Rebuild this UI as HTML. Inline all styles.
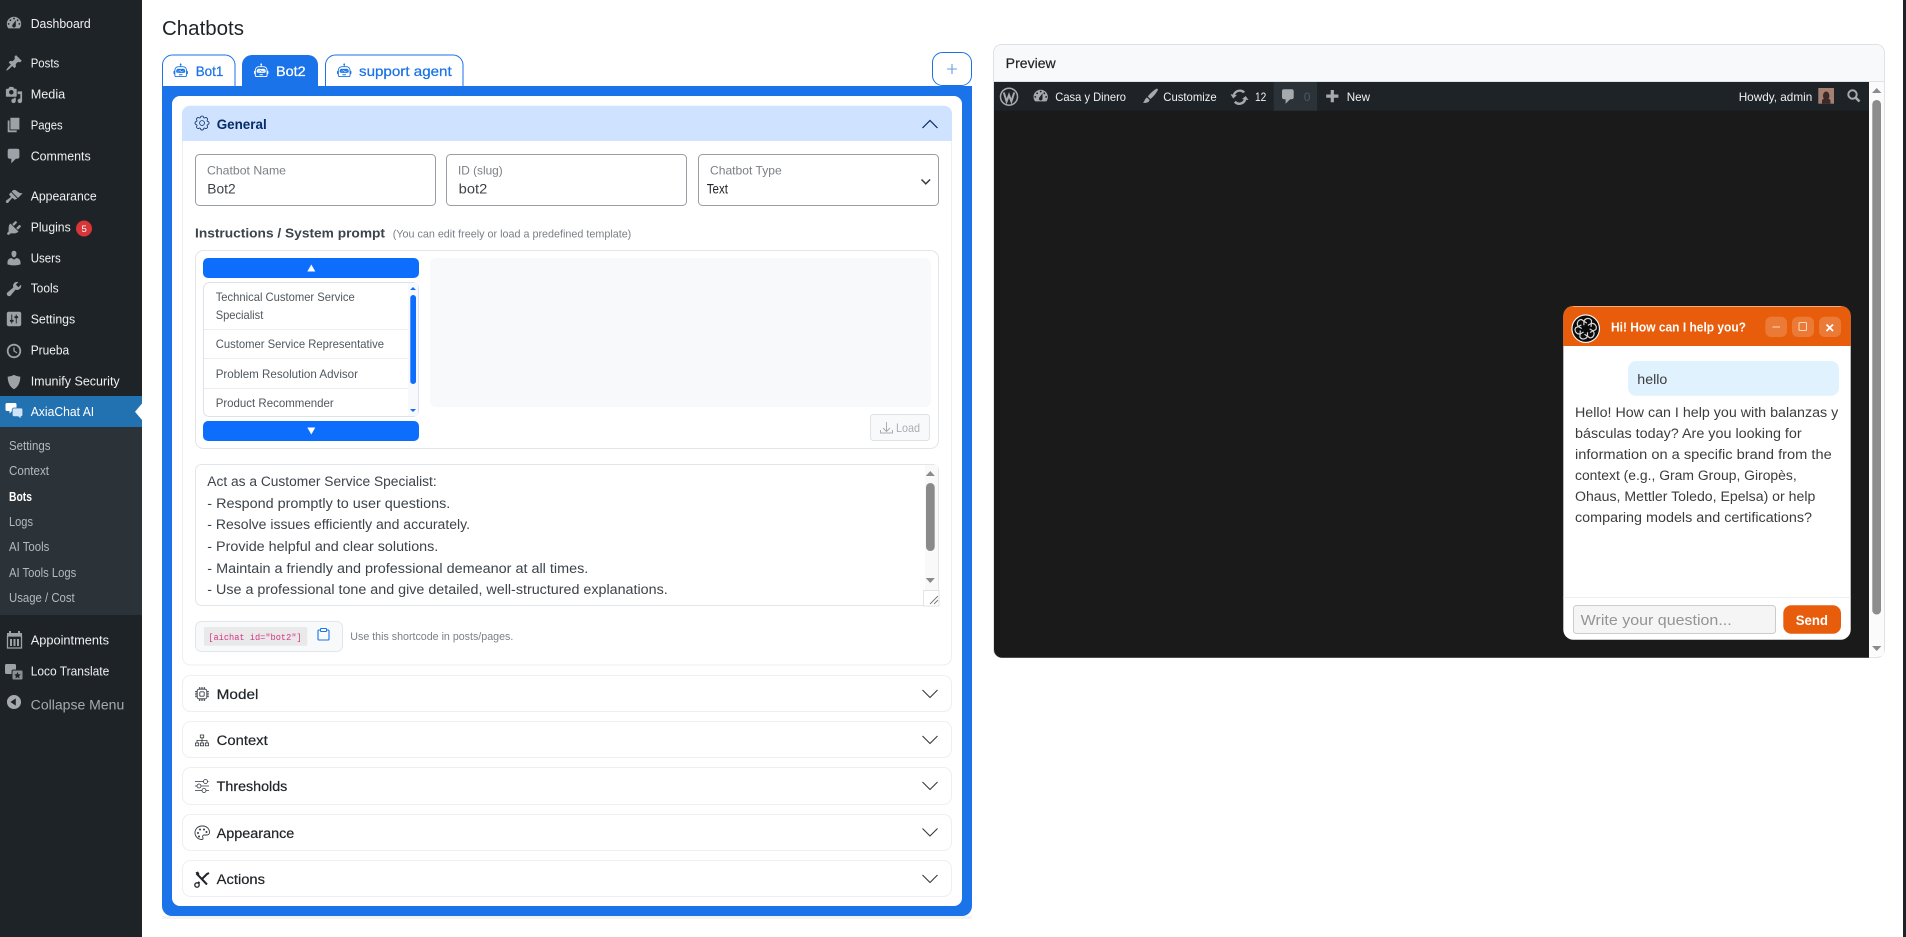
<!DOCTYPE html>
<html lang="en"><head><meta charset="utf-8"><title>Chatbots</title>
<style>
html,body{margin:0;padding:0;background:#fff;overflow:hidden}
svg{display:block}
text{font-family:"Liberation Sans",sans-serif;white-space:pre}
.m{font-size:13px;fill:#f0f0f1}
.s{font-size:12.5px;fill:#b4b9be}
.i{fill:#9ca2a7}
.hdr{font-size:13.5px;fill:#212529;stroke:#212529;stroke-width:.2}
.ch{fill:none;stroke:#343a40;stroke-width:1.1}
.lbl{font-size:12px;fill:#7c8085}
.val{font-size:13.5px;fill:#3c434a}
.li{font-size:12px;fill:#50575e}
.ta{font-size:13.5px;fill:#3c434a}
.ab{font-size:12px;fill:#f0f0f1}
.msg{font-size:13.5px;fill:#3c3c3c}
</style></head><body>
<svg width="1906" height="937" viewBox="0 0 1906 937" xmlns="http://www.w3.org/2000/svg">
<defs>
<path id="robot" d="M6 12.5a.5.5 0 0 1 .5-.5h3a.5.5 0 0 1 0 1h-3a.5.5 0 0 1-.5-.5M3 8.062C3 6.76 4.235 5.765 5.53 5.886a26.6 26.6 0 0 0 4.94 0C11.765 5.765 13 6.76 13 8.062v1.157a.93.93 0 0 1-.765.935c-.845.147-2.34.346-4.235.346s-3.39-.2-4.235-.346A.93.93 0 0 1 3 9.219zm4.542-.827a.25.25 0 0 0-.217.068l-.92.9a25 25 0 0 1-1.871-.183.25.25 0 0 0-.068.495c.55.076 1.232.149 2.02.193a.25.25 0 0 0 .189-.071l.754-.736.847 1.71a.25.25 0 0 0 .404.062l.932-.97a25 25 0 0 0 1.922-.188.25.25 0 0 0-.068-.495c-.538.074-1.207.145-1.98.189a.25.25 0 0 0-.166.076l-.754.785-.842-1.7a.25.25 0 0 0-.182-.135M8.5 1.866a1 1 0 1 0-1 0V3h-2A4.5 4.5 0 0 0 1 7.5V8a1 1 0 0 0-1 1v2a1 1 0 0 0 1 1v1a2 2 0 0 0 2 2h10a2 2 0 0 0 2-2v-1a1 1 0 0 0 1-1V9a1 1 0 0 0-1-1v-.5A4.5 4.5 0 0 0 10.5 3h-2zM14 7.5V13a1 1 0 0 1-1 1H3a1 1 0 0 1-1-1V7.5A3.5 3.5 0 0 1 5.5 4h5A3.5 3.5 0 0 1 14 7.5"/>
<path id="dash" d="M3.76 16h12.48c1.1-1.37 1.76-3.11 1.76-5 0-4.42-3.58-8-8-8s-8 3.58-8 8c0 1.89.66 3.63 1.76 5zM10 4c.55 0 1 .45 1 1s-.45 1-1 1-1-.45-1-1 .45-1 1-1zM6 6c.55 0 1 .45 1 1s-.45 1-1 1-1-.45-1-1 .45-1 1-1zm8 0c.55 0 1 .45 1 1s-.45 1-1 1-1-.45-1-1 .45-1 1-1zm-5.37 5.55L12 7v6c0 1.1-.9 2-2 2s-2-.9-2-2c0-.57.24-1.08.63-1.45zM4 10c.55 0 1 .45 1 1s-.45 1-1 1-1-.45-1-1 .45-1 1-1zm12 0c.55 0 1 .45 1 1s-.45 1-1 1-1-.45-1-1 .45-1 1-1z" fill-rule="evenodd"/>
<path id="bubble" d="M5 2h9c1.1 0 2 .9 2 2v7c0 1.1-.9 2-2 2h-2l-5 5v-5H5c-1.1 0-2-.9-2-2V4c0-1.1.9-2 2-2z"/>
<path id="brush" d="M14.48 11.06L7.41 3.99l1.5-1.5c.5-.56 2.3-.47 3.51.32 1.21.8 1.43 1.28 2.91 2.1 1.18.64 2.45 1.26 4.45.85zm-.71.71L6.7 4.7 4.93 6.47c-.39.39-.39 1.02 0 1.41l1.06 1.06c.39.39.39 1.03 0 1.42-.6.6-1.43 1.11-2.21 1.69-.35.26-.7.53-1.01.84C1.43 13.23.28 15.1 1.4 16.2c.86.86 1.99.53 2.83-.67.85-1.19 2.36-2.94 3.4-3.96.39-.39 1.03-.39 1.42 0l1.06 1.06c.39.39 1.02.39 1.41 0z"/>
<path id="chev" d="M0 0L7.5 7.5L15 0"/>
<path id="petal" d="M-1.800 -3.500V-7.200A4.200 4.200 0 0 1 5.800 -8.300L5.400 -1.800"/>
</defs>

<!-- page -->
<rect width="1906" height="937" fill="#fff"/>
<rect x="1903" y="0" width="3" height="937" fill="#1d2327"/>

<!-- sidebar -->
<rect x="0" y="0" width="142" height="937" fill="#1d2327"/>
<rect x="0" y="427" width="142" height="188" fill="#2c3338"/>
<rect x="0" y="396" width="142" height="31" fill="#2271b1"/>
<path d="M142 403.500L135 411.700L142 420z" fill="#fff"/>

<g class="i">
<use href="#dash" transform="translate(5,14) scale(.9)"/>
<path transform="translate(5,54) scale(.9)" d="M10.44 3.02l1.82-1.82 6.36 6.35-1.83 1.82c-1.05-.68-2.48-.57-3.41.36l-.75.75c-.92.93-1.04 2.35-.35 3.41l-1.83 1.82-2.41-2.41-2.8 2.79c-.42.42-3.38 2.71-3.8 2.29s1.86-3.39 2.28-3.81l2.79-2.79L4.1 9.36l1.83-1.82c1.05.69 2.48.57 3.4-.36l.75-.75c.93-.92 1.05-2.35.36-3.41z"/>
<path transform="translate(5,86) scale(.9)" d="M13 11V4c0-.55-.45-1-1-1h-1.67L9 1H5L3.67 3H2c-.55 0-1 .45-1 1v7c0 .55.45 1 1 1h10c.55 0 1-.45 1-1zM7 4.500c1.380 0 2.500 1.120 2.500 2.500S8.380 9.500 7 9.500 4.500 8.380 4.500 7 5.620 4.500 7 4.500zM14 6h5v10.500c0 1.380-1.120 2.500-2.500 2.500S14 17.880 14 16.500s1.120-2.500 2.500-2.500c.17 0 .34.020.5.050V9h-3V6zm-4 8.050V13h2v3.500c0 1.380-1.120 2.500-2.500 2.500S7 17.880 7 16.500 8.120 14 9.500 14c.17 0 .34.020.5.050z" fill-rule="evenodd"/>
<path transform="translate(5,116) scale(.9)" d="M6 15V2h10v13H6zm-1 1h8v2H3V5h2v11z"/>
<use href="#bubble" transform="translate(5,147) scale(.9)"/>
<use href="#brush" transform="translate(5,188) scale(.9)"/>
<path transform="translate(5,219) scale(.9)" d="M13.110 4.360L9.870 7.600 8 5.730l3.240-3.240c.35-.34 1.050-.2 1.560.32.52.51.66 1.210.31 1.550zm-8 1.770l.91-1.120 9.010 9.010-1.190.84c-.71.71-2.630 1.160-3.820 1.160H6.140L4.900 17.260c-.59.59-1.540.59-2.120 0-.59-.58-.59-1.530 0-2.120l1.240-1.240v-3.880c0-1.130.4-3.190 1.090-3.890zm7.260 3.970l3.240-3.240c.34-.35 1.040-.21 1.550.31.52.51.66 1.210.31 1.550l-3.240 3.250z"/>
<path transform="translate(5,249) scale(.9)" d="M10 9.250c-2.270 0-2.730-3.440-2.730-3.440C7 4.020 7.820 2 9.970 2c2.160 0 2.980 2.020 2.710 3.810 0 0-.41 3.440-2.680 3.440zm0 2.570L12.720 10c2.390 0 4.520 2.330 4.520 4.530v2.490s-3.650 1.130-7.240 1.130c-3.650 0-7.240-1.130-7.240-1.130v-2.490c0-2.250 1.940-4.480 4.470-4.480z"/>
<path transform="translate(5,280) scale(.9)" d="M16.680 9.770c-1.340 1.340-3.300 1.670-4.950.99l-5.410 6.520c-.99.99-2.590.99-3.580 0s-.99-2.590 0-3.570l6.520-5.420c-.68-1.650-.35-3.610.99-4.950 1.280-1.280 3.120-1.620 4.720-1.060l-2.890 2.890 2.820 2.820 2.860-2.870c.53 1.580.18 3.390-1.080 4.650z"/>
<path transform="translate(5,310) scale(.9)" fill-rule="evenodd" d="M16 2H4C2.900 2 2 2.900 2 4v12c0 1.100.9 2 2 2h12c1.100 0 2-.9 2-2V4c0-1.100-.9-2-2-2zM7 5h1v6h1.500v2H8v2H7v-2H5.500v-2H7zm5 0h1v2h1.500v2H13v6h-1V9h-1.500V7H12z"/>
<path transform="translate(5,342) scale(.9)" fill-rule="evenodd" d="M10 2c4.420 0 8 3.580 8 8s-3.580 8-8 8-8-3.580-8-8 3.580-8 8-8zm0 2c-3.310 0-6 2.690-6 6s2.690 6 6 6 6-2.690 6-6-2.690-6-6-6zM9.300 6h1.400v3.600l3 1.900-.7 1.100-3.700-2.300z"/>
<path transform="translate(5,373) scale(.9)" d="M10 2s3 2 7 2c0 11-7 14-7 14S3 15 3 4c4 0 7-2 7-2z"/>
</g>
<!-- AxiaChat icon -->
<path d="M7 403h8a1.500 1.500 0 0 1 1.500 1.500v5a1.500 1.500 0 0 1-1.500 1.500h-3l-2.500 2.500V411H7a1.500 1.500 0 0 1-1.500-1.500v-5A1.500 1.500 0 0 1 7 403z" fill="#fff"/>
<path d="M14 408h7a1.800 1.800 0 0 1 1.800 1.800v5a1.800 1.800 0 0 1-1.800 1.800v2.400l-3-2.400h-4a1.800 1.800 0 0 1-1.800-1.800v-5A1.800 1.800 0 0 1 14 408z" fill="#cfe4f7" stroke="#2271b1" stroke-width=".8"/>
<!-- appointments -->
<g fill="#9ca2a7"><rect x="7" y="633" width="15" height="3.500"/><rect x="9" y="631" width="2" height="3"/><rect x="18" y="631" width="2" height="3"/></g>
<rect x="7.500" y="636" width="14" height="12" fill="none" stroke="#9ca2a7" stroke-width="1.300"/>
<g fill="#9ca2a7"><rect x="10" y="639" width="2" height="7"/><rect x="13.500" y="639" width="2" height="7"/><rect x="17" y="639" width="2" height="7"/></g>
<!-- loco -->
<rect x="5" y="664" width="11" height="10" rx="1.500" fill="#9ca2a7"/>
<rect x="12" y="670" width="11" height="10" rx="1.500" fill="#8a9096" stroke="#1d2327"/>
<path d="M17.500 672l1 2.300 2.300.2-1.700 1.600.5 2.300-2.100-1.200-2.100 1.200.5-2.300-1.700-1.600 2.300-.2z" fill="#1d2327"/>
<!-- collapse -->
<path transform="translate(5,693) scale(.9)" fill="#a7aaad" fill-rule="evenodd" d="M10 2.160c4.330 0 7.840 3.510 7.840 7.840s-3.510 7.840-7.840 7.840S2.160 14.330 2.160 10 5.670 2.160 10 2.160zM12 14V6l-6 4z"/>

<text class="m" x="30.700" y="28" textLength="60" lengthAdjust="spacingAndGlyphs">Dashboard</text>
<text class="m" x="30.700" y="67.700" textLength="28.500" lengthAdjust="spacingAndGlyphs">Posts</text>
<text class="m" x="30.700" y="98.700" textLength="34.500" lengthAdjust="spacingAndGlyphs">Media</text>
<text class="m" x="30.700" y="129.700" textLength="32" lengthAdjust="spacingAndGlyphs">Pages</text>
<text class="m" x="30.700" y="160.700" textLength="60" lengthAdjust="spacingAndGlyphs">Comments</text>
<text class="m" x="30.700" y="200.700" textLength="66" lengthAdjust="spacingAndGlyphs">Appearance</text>
<text class="m" x="30.700" y="231.700" textLength="40" lengthAdjust="spacingAndGlyphs">Plugins</text>
<circle cx="84" cy="228.500" r="8" fill="#d63638"/>
<text x="81.500" y="232" font-size="9.500" fill="#fff">5</text>
<text class="m" x="30.700" y="262.700" textLength="30" lengthAdjust="spacingAndGlyphs">Users</text>
<text class="m" x="30.700" y="292.700" textLength="28" lengthAdjust="spacingAndGlyphs">Tools</text>
<text class="m" x="30.700" y="323.700" textLength="44.500" lengthAdjust="spacingAndGlyphs">Settings</text>
<text class="m" x="30.700" y="354.700" textLength="38.500" lengthAdjust="spacingAndGlyphs">Prueba</text>
<text class="m" x="30.700" y="385.700" textLength="89" lengthAdjust="spacingAndGlyphs">Imunify Security</text>
<text class="m" x="30.700" y="416.200" textLength="63.500" lengthAdjust="spacingAndGlyphs" style="fill:#fff">AxiaChat AI</text>
<text class="s" x="9" y="450" textLength="41.500" lengthAdjust="spacingAndGlyphs">Settings</text>
<text class="s" x="9" y="475" textLength="40" lengthAdjust="spacingAndGlyphs">Context</text>
<text class="s" x="9" y="501" textLength="23" lengthAdjust="spacingAndGlyphs" style="fill:#fff;font-weight:bold">Bots</text>
<text class="s" x="9" y="526" textLength="24" lengthAdjust="spacingAndGlyphs">Logs</text>
<text class="s" x="9" y="551" textLength="40.300" lengthAdjust="spacingAndGlyphs">AI Tools</text>
<text class="s" x="9" y="577" textLength="67.300" lengthAdjust="spacingAndGlyphs">AI Tools Logs</text>
<text class="s" x="9" y="602" textLength="65.700" lengthAdjust="spacingAndGlyphs">Usage / Cost</text>
<text class="m" x="30.700" y="644.700" textLength="78.300" lengthAdjust="spacingAndGlyphs">Appointments</text>
<text class="m" x="30.700" y="675.700" textLength="78.600" lengthAdjust="spacingAndGlyphs">Loco Translate</text>
<text class="m" x="30.700" y="709.700" textLength="93.600" lengthAdjust="spacingAndGlyphs" style="fill:#a7aaad;font-size:13.500px">Collapse Menu</text>

<!-- title -->
<text x="162" y="35" font-size="20.500" fill="#1d2327" textLength="82" lengthAdjust="spacingAndGlyphs">Chatbots</text>

<!-- tabs -->
<path d="M162.500 87V65a10 10 0 0 1 10-10h52.500a10 10 0 0 1 10 10V87z" fill="#fff" stroke="#1a73e8"/>
<path d="M242 87V65a10 10 0 0 1 10-10h56a10 10 0 0 1 10 10V87z" fill="#1a73e8"/>
<path d="M325.500 87V65a10 10 0 0 1 10-10h117.500a10 10 0 0 1 10 10V87z" fill="#fff" stroke="#1a73e8"/>
<use href="#robot" fill="#1a73e8" transform="translate(173.500,63.500) scale(.9)"/>
<use href="#robot" fill="#fff" transform="translate(254,63.500) scale(.9)"/>
<use href="#robot" fill="#1a73e8" transform="translate(337,63.500) scale(.9)"/>
<g font-size="14" stroke-width=".25">
<text x="195.700" y="76" fill="#1a73e8" stroke="#1a73e8" textLength="27.700" lengthAdjust="spacingAndGlyphs">Bot1</text>
<text x="276" y="76" fill="#fff" stroke="#fff" textLength="29.700" lengthAdjust="spacingAndGlyphs">Bot2</text>
<text x="359" y="76" fill="#1a73e8" stroke="#1a73e8" textLength="92.700" lengthAdjust="spacingAndGlyphs">support agent</text>
</g>
<rect x="932.500" y="52.500" width="39" height="33" rx="10" fill="#fff" stroke="#1a73e8"/>
<path d="M952 57v10M947 62h10" transform="translate(0,7)" stroke="#6a9be0" stroke-width="1.100" fill="none"/>

<!-- blue container -->
<rect x="162" y="916" width="810" height="3" fill="#f3f3f3"/>
<path d="M162 86H972V906a10 10 0 0 1-10 10H172a10 10 0 0 1-10-10z" fill="#1a73e8"/>
<path d="M172 104a8 8 0 0 1 8-8H954a8 8 0 0 1 8 8V898a8 8 0 0 1-8 8H180a8 8 0 0 1-8-8z" fill="#fff"/>

<!-- General -->
<rect x="182.500" y="110" width="769" height="555" rx="8" fill="#fff" stroke="#edeff1"/>
<path d="M182 113.700a8 8 0 0 1 8-8H944a8 8 0 0 1 8 8V141H182z" fill="#cfe2ff"/>
<path transform="translate(195,116) scale(.88)" fill="none" stroke="#052c65" stroke-width=".9" d="M9.796 1.343c-.527-1.790-3.065-1.790-3.592 0l-.094.319a.873.873 0 0 1-1.255.520l-.292-.160c-1.640-.892-3.433.902-2.540 2.541l.159.292a.873.873 0 0 1-.520 1.255l-.319.094c-1.790.527-1.790 3.065 0 3.592l.319.094a.873.873 0 0 1 .520 1.255l-.160.292c-.892 1.640.901 3.434 2.541 2.540l.292-.159a.873.873 0 0 1 1.255.520l.094.319c.527 1.790 3.065 1.790 3.592 0l.094-.319a.873.873 0 0 1 1.255-.520l.292.160c1.640.893 3.434-.902 2.540-2.541l-.159-.292a.873.873 0 0 1 .520-1.255l.319-.094c1.790-.527 1.790-3.065 0-3.592l-.319-.094a.873.873 0 0 1-.520-1.255l.160-.292c.893-1.640-.902-3.433-2.541-2.540l-.292.159a.873.873 0 0 1-1.255-.520zM10.750 8a2.750 2.750 0 1 1-5.500 0 2.750 2.750 0 0 1 5.500 0z"/>
<text x="216.700" y="129" font-size="13.500" font-weight="bold" fill="#052c65" textLength="50" lengthAdjust="spacingAndGlyphs">General</text>
<use href="#chev" transform="translate(922.500,128) scale(1,-1)" fill="none" stroke="#052c65" stroke-width="1.200"/>

<!-- fields -->
<g fill="#fff" stroke="#9a9da1">
<rect x="195.500" y="154.500" width="240" height="51" rx="4"/>
<rect x="446.500" y="154.500" width="240" height="51" rx="4"/>
<rect x="698.500" y="154.500" width="240" height="51" rx="4"/>
</g>
<text class="lbl" x="207" y="174.500" textLength="79" lengthAdjust="spacingAndGlyphs">Chatbot Name</text>
<text class="val" x="207.300" y="193.300" textLength="28.300" lengthAdjust="spacingAndGlyphs">Bot2</text>
<text class="lbl" x="458" y="174.500" textLength="44.700" lengthAdjust="spacingAndGlyphs">ID (slug)</text>
<text class="val" x="458.700" y="193.300" textLength="28.600" lengthAdjust="spacingAndGlyphs">bot2</text>
<text class="lbl" x="710" y="174.500" textLength="71.700" lengthAdjust="spacingAndGlyphs">Chatbot Type</text>
<text class="val" x="706.700" y="193.300" textLength="21.300" lengthAdjust="spacingAndGlyphs" style="fill:#212529">Text</text>
<path d="M921.500 179.500l4.300 4.300 4.300-4.300" fill="none" stroke="#343a40" stroke-width="1.500"/>

<text x="195" y="237.300" font-size="13" font-weight="bold" fill="#3c434a" textLength="190" lengthAdjust="spacingAndGlyphs">Instructions / System prompt</text>
<text x="392.700" y="237.300" font-size="11" fill="#7a8087" textLength="238.600" lengthAdjust="spacingAndGlyphs">(You can edit freely or load a predefined template)</text>

<!-- template box -->
<rect x="195.500" y="250.500" width="743" height="198" rx="8" fill="#fff" stroke="#e3e6e9"/>
<rect x="203" y="258" width="216" height="20" rx="5" fill="#0d6efd"/>
<path d="M311.300 264.500l4 7h-8z" fill="#fff"/>
<rect x="203.500" y="282.500" width="215" height="134" rx="6" fill="#fff" stroke="#dee2e6"/>
<rect x="408" y="283" width="10" height="133" fill="#f8f9fc"/>
<rect x="410.300" y="295" width="5.700" height="89" rx="2.800" fill="#0d6efd"/>
<path d="M413 287l3 3h-6z M413 412l3-3h-6z" fill="#0d6efd"/>
<g stroke="#eceef0"><path d="M204 329.500H408M204 358.500H408M204 388.500H408"/></g>
<text class="li" x="215.700" y="300.800" textLength="139" lengthAdjust="spacingAndGlyphs">Technical Customer Service</text>
<text class="li" x="215.700" y="318.800" textLength="47.600" lengthAdjust="spacingAndGlyphs">Specialist</text>
<text class="li" x="215.700" y="347.800" textLength="168.300" lengthAdjust="spacingAndGlyphs">Customer Service Representative</text>
<text class="li" x="215.700" y="377.800" textLength="142.300" lengthAdjust="spacingAndGlyphs">Problem Resolution Advisor</text>
<text class="li" x="215.700" y="406.800" textLength="118" lengthAdjust="spacingAndGlyphs">Product Recommender</text>
<rect x="203" y="421" width="216" height="20" rx="5" fill="#0d6efd"/>
<path d="M311.300 434.500l4-7h-8z" fill="#fff"/>
<rect x="430" y="258" width="501" height="149" rx="6" fill="#f8f9fa"/>
<rect x="870.500" y="414.500" width="59" height="26" rx="3" fill="#f8f9fa" stroke="#dee2e6"/>
<path d="M886.500 422v9M883 428l3.500 3.500 3.500-3.500M880.500 430v3h12v-3" fill="none" stroke="#a9aeb3" stroke-width="1"/>
<text x="896" y="432" font-size="12" fill="#a9aeb3" textLength="24" lengthAdjust="spacingAndGlyphs">Load</text>

<!-- textarea -->
<rect x="195.500" y="464.500" width="743" height="141" rx="6" fill="#fff" stroke="#e3e6e9"/>
<rect x="925" y="465" width="13" height="126" fill="#f9f9f9"/>
<rect x="926" y="483" width="8.700" height="68" rx="4.300" fill="#8a8a8a"/>
<path d="M930.300 471l4.500 5h-9zM930.300 583l4.500-5h-9z" fill="#8a8a8a"/>
<rect x="923.500" y="590.500" width="15.500" height="15.500" fill="#fff" stroke="#e3e3e3"/>
<path d="M930 604l8-8M934 604l4-4" stroke="#777" stroke-width=".9"/>
<text class="ta" x="207.300" y="486" textLength="229.400" lengthAdjust="spacingAndGlyphs">Act as a Customer Service Specialist:</text>
<text class="ta" x="207.300" y="508" textLength="243" lengthAdjust="spacingAndGlyphs">- Respond promptly to user questions.</text>
<text class="ta" x="207.300" y="529" textLength="262.700" lengthAdjust="spacingAndGlyphs">- Resolve issues efficiently and accurately.</text>
<text class="ta" x="207.300" y="551" textLength="231" lengthAdjust="spacingAndGlyphs">- Provide helpful and clear solutions.</text>
<text class="ta" x="207.300" y="573" textLength="381" lengthAdjust="spacingAndGlyphs">- Maintain a friendly and professional demeanor at all times.</text>
<text class="ta" x="207.300" y="594" textLength="460.400" lengthAdjust="spacingAndGlyphs">- Use a professional tone and give detailed, well-structured explanations.</text>

<!-- shortcode -->
<rect x="195.500" y="621.500" width="147" height="30" rx="6" fill="#f8f9fa" stroke="#e3e6e9"/>
<rect x="204" y="627" width="103.300" height="18.700" rx="1" fill="#e9e9ea"/>
<text x="208.300" y="640" font-size="9.500" style="font-family:'Liberation Mono',monospace" fill="#d63384" textLength="93.400" lengthAdjust="spacingAndGlyphs">[aichat id="bot2"]</text>
<path d="M320.500 630h-1.500a1 1 0 0 0-1 1v8a1 1 0 0 0 1 1h9a1 1 0 0 0 1-1v-8a1 1 0 0 0-1-1h-1.500" fill="none" stroke="#1a73e8" stroke-width="1.100"/>
<rect x="320.500" y="628.500" width="6" height="3" rx=".6" fill="#fff" stroke="#1a73e8"/>
<text x="350.300" y="640" font-size="11" fill="#7a8087" textLength="163" lengthAdjust="spacingAndGlyphs">Use this shortcode in posts/pages.</text>

<!-- accordion items -->
<g fill="#fff" stroke="#edeff1">
<rect x="182.500" y="675.500" width="769" height="36" rx="8"/>
<rect x="182.500" y="721.500" width="769" height="36" rx="8"/>
<rect x="182.500" y="767.500" width="769" height="37" rx="8"/>
<rect x="182.500" y="814.500" width="769" height="36" rx="8"/>
<rect x="182.500" y="860.500" width="769" height="36" rx="8"/>
</g>
<text class="hdr" x="216.700" y="699" textLength="41.700" lengthAdjust="spacingAndGlyphs">Model</text>
<text class="hdr" x="216.700" y="745" textLength="51" lengthAdjust="spacingAndGlyphs">Context</text>
<text class="hdr" x="216.700" y="791" textLength="70.600" lengthAdjust="spacingAndGlyphs">Thresholds</text>
<text class="hdr" x="216.700" y="838" textLength="77.600" lengthAdjust="spacingAndGlyphs">Appearance</text>
<text class="hdr" x="216.700" y="884" textLength="48.300" lengthAdjust="spacingAndGlyphs">Actions</text>
<use href="#chev" class="ch" transform="translate(922.500,690)"/>
<use href="#chev" class="ch" transform="translate(922.500,736)"/>
<use href="#chev" class="ch" transform="translate(922.500,782)"/>
<use href="#chev" class="ch" transform="translate(922.500,828.500)"/>
<use href="#chev" class="ch" transform="translate(922.500,875)"/>
<!-- cpu -->
<path transform="translate(195,687) scale(.875)" fill="#343a40" d="M5 0a.5.5 0 0 1 .5.5V2h1V.5a.5.5 0 0 1 1 0V2h1V.5a.5.5 0 0 1 1 0V2h1V.5a.5.5 0 0 1 1 0V2A2.500 2.500 0 0 1 14 4.500h1.500a.5.5 0 0 1 0 1H14v1h1.500a.5.5 0 0 1 0 1H14v1h1.500a.5.5 0 0 1 0 1H14v1h1.500a.5.5 0 0 1 0 1H14a2.500 2.500 0 0 1-2.500 2.500v1.500a.5.5 0 0 1-1 0V14h-1v1.500a.5.5 0 0 1-1 0V14h-1v1.500a.5.5 0 0 1-1 0V14h-1v1.500a.5.5 0 0 1-1 0V14A2.500 2.500 0 0 1 2 11.500H.5a.5.5 0 0 1 0-1H2v-1H.5a.5.5 0 0 1 0-1H2v-1H.5a.5.5 0 0 1 0-1H2v-1H.5a.5.5 0 0 1 0-1H2A2.500 2.500 0 0 1 4.500 2V.5A.5.5 0 0 1 5 0m-.5 3A1.500 1.500 0 0 0 3 4.500v7A1.500 1.500 0 0 0 4.500 13h7a1.500 1.500 0 0 0 1.500-1.500v-7A1.500 1.500 0 0 0 11.500 3zM5 6.500A1.500 1.500 0 0 1 6.500 5h3A1.500 1.500 0 0 1 11 6.500v3A1.500 1.500 0 0 1 9.500 11h-3A1.500 1.500 0 0 1 5 9.500zM6.500 6a.5.5 0 0 0-.5.5v3a.5.5 0 0 0 .5.5h3a.5.5 0 0 0 .5-.5v-3a.5.5 0 0 0-.5-.5z"/>
<!-- diagram -->
<g fill="none" stroke="#343a40" stroke-width=".8">
<rect x="200.300" y="735" width="3.400" height="2.800"/><rect x="195.500" y="743" width="3.200" height="2.800"/><rect x="200.400" y="743" width="3.200" height="2.800"/><rect x="205.300" y="743" width="3.200" height="2.800"/>
<path d="M202 737.800v5.200M197 743v-2.600h10v2.600"/>
<!-- sliders -->
<path d="M195 781.500h8.500M207.500 781.500h1M195 786h2M201 786h8M195 790.500h7M206 790.500h3"/>
<circle cx="205.500" cy="781.500" r="2"/><circle cx="199" cy="786" r="2"/><circle cx="204" cy="790.500" r="2"/>
<!-- palette -->
<path stroke-width=".9" d="M202 826c-3.900 0-7 3-7 6.700s3 6.800 6.600 6.800c1.500 0 1.800-1 1.200-2-.7-1.200 0-2.500 1.500-2.500h2.500c1.500 0 2.700-1 2.700-2.500 0-3.700-3.100-6.500-6.500-6.500z"/>
</g>
<g fill="#343a40"><circle cx="198" cy="833" r="1"/><circle cx="200" cy="829.500" r="1"/><circle cx="204" cy="829.500" r="1"/><circle cx="206.500" cy="832" r="1"/><circle cx="199" cy="836.500" r="1"/></g>
<!-- tools -->
<path d="M196.500 873.500l10.500 11" stroke="#212529" stroke-width="2"/>
<path d="M209 873l-2 1-5.500 5.500M199.500 882l-1.500 1.500" stroke="#212529" stroke-width="2" fill="none"/>
<circle cx="197" cy="885" r="2.200" fill="none" stroke="#212529" stroke-width="1.300"/>
<path d="M195.500 872.500l2.500-1 1.500 2.500-2 1.500z" fill="#212529"/>

<!-- preview card -->
<rect x="993.500" y="44.500" width="891" height="613" rx="8" fill="#fff" stroke="#dee2e6"/>
<path d="M994 82V53a8 8 0 0 1 8-8H1876a8 8 0 0 1 8 8V82z" fill="#f8f9fa"/>
<rect x="994" y="81" width="890" height="1" fill="#dee2e6"/>
<text class="hdr" x="1005.700" y="68" textLength="50" lengthAdjust="spacingAndGlyphs">Preview</text>
<path d="M994 82H1869V657.700H1002a8 8 0 0 1-8-8z" fill="#1a1a1a"/>
<rect x="994" y="82" width="875" height="28.700" fill="#1d2327"/>
<rect x="1273.700" y="82" width="43.300" height="28.700" fill="#2c3338"/>
<rect x="1869" y="82" width="15" height="574" fill="#fbfbfb"/>
<rect x="1872.300" y="100" width="8.700" height="514.500" rx="4.300" fill="#8c8c8c"/>
<path d="M1876.700 88l4.700 5h-9.400zM1876.700 651l4.700-5h-9.400z" fill="#8c8c8c"/>

<!-- admin bar -->
<circle cx="1009" cy="96.700" r="8.500" fill="none" stroke="#a7aaad" stroke-width="1.500"/>
<path d="M1003.800 92.500l2.800 9 2.400-6.500 2.400 6.500 2.800-9" fill="none" stroke="#a7aaad" stroke-width="2"/>
<g fill="#a7aaad">
<use href="#dash" transform="translate(1031.700,87) scale(.9)"/>
<path d="M1157 88.500c-3 1.500-7 4.800-9.200 8l2.500 2.500c3-2.200 6.200-6 7.700-9.500z"/>
<path d="M1147 97.500c-2 .6-2.200 3.600-4 5.300 3 .4 6-.2 6.600-2.800z"/>
<path fill-rule="evenodd" d="M1239.700 89.500a7.300 7.300 0 0 0-6.900 5l-2.300-.3 2.700 4.300 3.700-3.200-1.800-.3a4.800 4.800 0 0 1 8.100-1.700l1.900-1.600a7.300 7.300 0 0 0-5.400-2.200zm5.900 6.500-3.500 3 1.700.4a4.800 4.800 0 0 1-8 1.500l-1.900 1.700a7.300 7.300 0 0 0 12.400-2.900l2.300.3z"/>
<use href="#bubble" transform="translate(1279.300,87.500) scale(.9)"/>
<path d="M1330.700 90h3.200v4.500h4.500v3.200h-4.500v4.500h-3.200v-4.500h-4.500v-3.200h4.500z"/>
</g>
<text class="ab" x="1055.300" y="101" textLength="70.700" lengthAdjust="spacingAndGlyphs">Casa y Dinero</text>
<text class="ab" x="1163.300" y="101" textLength="53.400" lengthAdjust="spacingAndGlyphs">Customize</text>
<text class="ab" x="1255" y="101" textLength="11.300" lengthAdjust="spacingAndGlyphs">12</text>
<text class="ab" x="1303.700" y="101" style="fill:#50575e">0</text>
<text class="ab" x="1346.700" y="101" textLength="23.300" lengthAdjust="spacingAndGlyphs">New</text>
<text class="ab" x="1738.700" y="101" textLength="73.600" lengthAdjust="spacingAndGlyphs">Howdy, admin</text>
<rect x="1818.300" y="88" width="15.700" height="15.700" fill="#a47f72"/>
<path d="M1822 103.700v-3c0-1 1-1.700 2-2a3.200 3.200 0 0 1-1-2.700c0-2.500 1.300-4.500 3.200-4.500s3.200 2 3.200 4.500c0 1-.3 2-1 2.700 1 .3 2 1 2 2v3z" fill="#3d2a28"/>
<circle cx="1852.500" cy="94.500" r="4.200" fill="none" stroke="#a7aaad" stroke-width="2"/>
<path d="M1855.500 97.500l4 4" stroke="#a7aaad" stroke-width="2.600"/>

<!-- chat widget -->
<path d="M1573.300 306H1840.700a10 10 0 0 1 10 10V629.700a10 10 0 0 1-10 10H1573.300a10 10 0 0 1-10-10V316a10 10 0 0 1 10-10z" fill="#fff"/>
<path d="M1573.300 306H1840.700a10 10 0 0 1 10 10V346H1563.300V316a10 10 0 0 1 10-10z" fill="#e85d0c"/>
<path d="M1573.300 306.400H1840.700" stroke="#f5c9a8" stroke-width=".8"/>
<circle cx="1585.700" cy="328.700" r="14.300" fill="#fff"/>
<circle cx="1585.700" cy="328.700" r="13.200" fill="#0b0b0b"/>
<g fill="none" stroke="#d8d8d8" stroke-width="1.200" transform="translate(1585.700,328.700)">
<use href="#petal"/>
<use href="#petal" transform="rotate(60)"/>
<use href="#petal" transform="rotate(120)"/>
<use href="#petal" transform="rotate(180)"/>
<use href="#petal" transform="rotate(240)"/>
<use href="#petal" transform="rotate(300)"/>
</g>
<text x="1611" y="331.700" font-size="12.500" font-weight="bold" fill="#fff" textLength="135" lengthAdjust="spacingAndGlyphs">Hi! How can I help you?</text>
<g fill="#fff" fill-opacity=".18">
<rect x="1765.300" y="316.700" width="21.700" height="20.300" rx="6"/>
<rect x="1792" y="316.700" width="22" height="20.300" rx="6"/>
<rect x="1819" y="316.700" width="22" height="20.300" rx="6"/>
</g>
<path d="M1772.500 327h7.500" stroke="#ffd9c2" stroke-width="1"/>
<rect x="1799" y="322.500" width="7.500" height="8" rx="1" fill="none" stroke="#ffd9c2" stroke-width="1"/>
<path d="M1826.500 324.500l6.500 6.500M1833 324.500l-6.500 6.500" stroke="#fff" stroke-width="1.800"/>
<rect x="1628" y="361" width="211" height="34.700" rx="8" fill="#e0f2fe"/>
<text class="msg" x="1637.300" y="384" textLength="30" lengthAdjust="spacingAndGlyphs">hello</text>
<text class="msg" x="1575" y="417" textLength="263.300" lengthAdjust="spacingAndGlyphs">Hello! How can I help you with balanzas y</text>
<text class="msg" x="1575" y="438" textLength="226.700" lengthAdjust="spacingAndGlyphs">básculas today? Are you looking for</text>
<text class="msg" x="1575" y="459" textLength="256.700" lengthAdjust="spacingAndGlyphs">information on a specific brand from the</text>
<text class="msg" x="1575" y="480" textLength="221.700" lengthAdjust="spacingAndGlyphs">context (e.g., Gram Group, Giropès,</text>
<text class="msg" x="1575" y="501" textLength="240.300" lengthAdjust="spacingAndGlyphs">Ohaus, Mettler Toledo, Epelsa) or help</text>
<text class="msg" x="1575" y="522" textLength="237" lengthAdjust="spacingAndGlyphs">comparing models and certifications?</text>
<rect x="1563.300" y="597" width="287.400" height="1" fill="#eee"/>
<rect x="1573.500" y="605.500" width="202" height="28" rx="3" fill="#f5f5f5" stroke="#ccc"/>
<text x="1580.700" y="625" font-size="14.500" fill="#949494" textLength="151" lengthAdjust="spacingAndGlyphs">Write your question...</text>
<rect x="1783.300" y="605.300" width="57.700" height="28.400" rx="8" fill="#e85d0c"/>
<text x="1795.700" y="625" font-size="13.500" font-weight="bold" fill="#fff" textLength="32.300" lengthAdjust="spacingAndGlyphs">Send</text>
</svg>
</body></html>
